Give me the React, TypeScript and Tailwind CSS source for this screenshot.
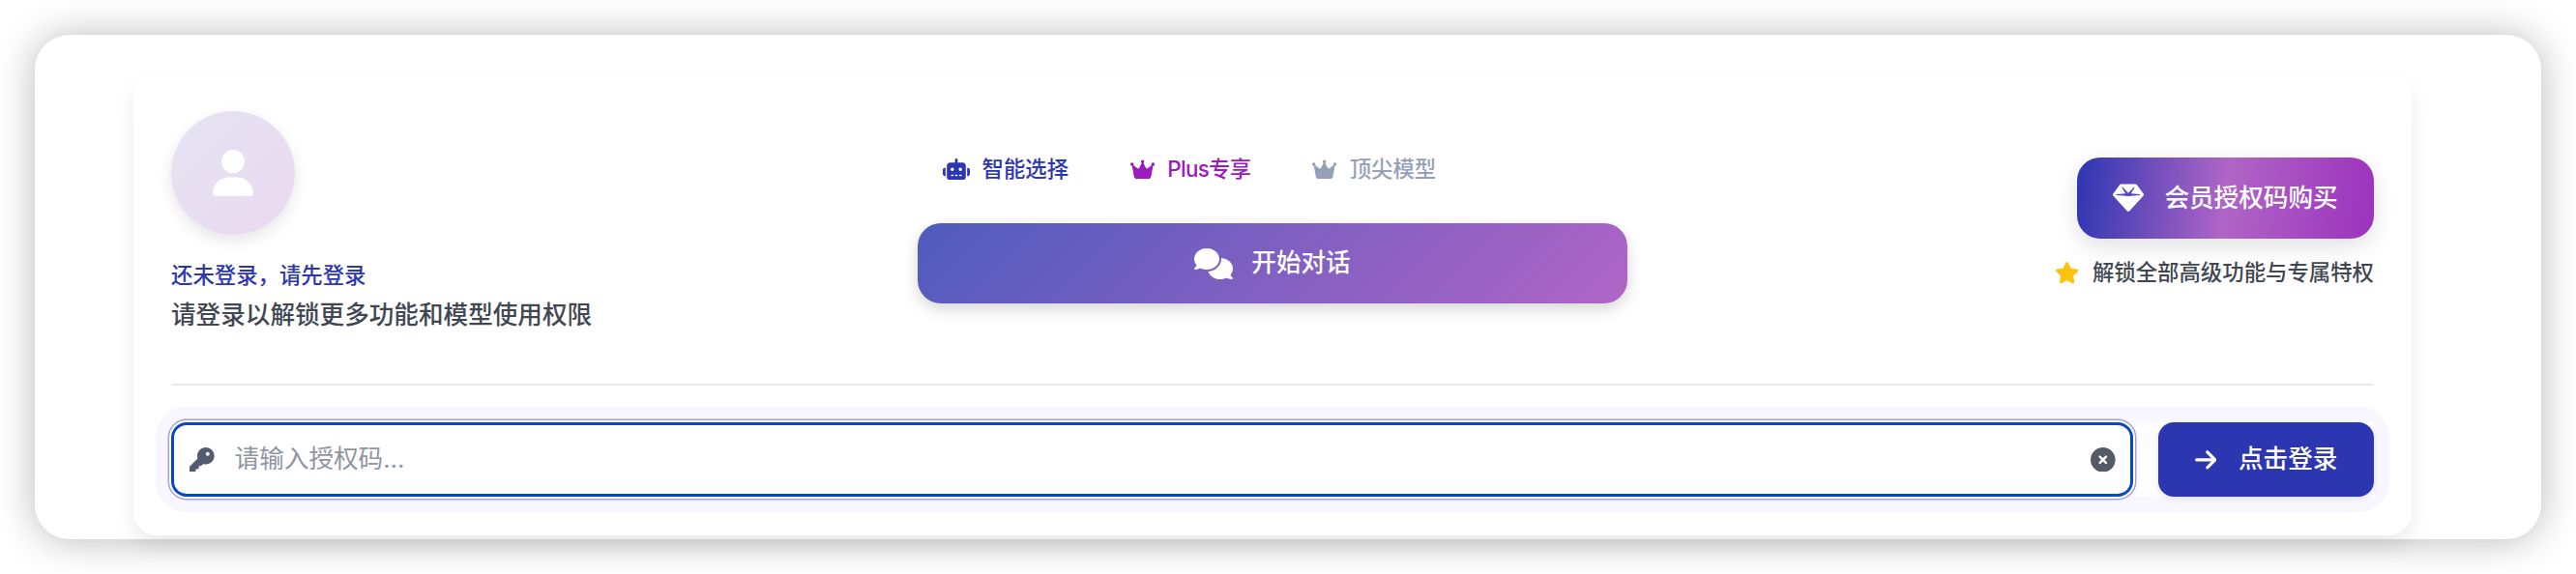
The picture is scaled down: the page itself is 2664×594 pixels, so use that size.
import { FaArrowRight, FaCircleXmark, FaComments, FaCrown, FaGem, FaKey, FaRobot, FaStar, FaUser } from 'react-icons/fa6';

const tabs = [
  { label: '智能选择', color: 'text-[#2d36b1]', Icon: FaRobot, iconSize: 'h-[22.4px] w-[28px]' },
  { label: 'Plus专享', color: 'tracking-[-0.7px] text-[#9c1ac0]', Icon: FaCrown, iconSize: 'h-[22.4px] w-[25.2px]' },
  { label: '顶尖模型', color: 'text-[#94a0b8]', Icon: FaCrown, iconSize: 'h-[22.4px] w-[25.2px]' },
];

export default function App() {
  return (
    <div className="h-[594px] w-[2664px] overflow-hidden bg-white p-[36px] font-['Inter','Noto_Sans_CJK_SC',sans-serif]">
      <div className="h-[522px] rounded-[36px] bg-white pl-[102px] pr-[134px] pt-[39px] shadow-[0_1px_40px_rgba(0,0,0,0.28)]">
        <div className="h-[479px] rounded-[24px] bg-white px-[39px] pt-[40px] shadow-[0_12px_24px_rgba(0,0,0,0.08)]">
          {/* Top row */}
          <div className="grid h-[284px] grid-cols-[1fr_734px_1fr] border-b-2 border-[#e8e9ec]">
            <div>
              <div className="flex h-[128px] w-[128px] items-center justify-center rounded-full bg-[linear-gradient(135deg,#e4e4f4,#ebd8ee)] shadow-[0_6px_16px_rgba(0,0,0,0.1)]">
                <FaUser className="h-[48px] w-[42px] text-white" />
              </div>
              <p className="mt-[25px] text-[22.4px] font-medium leading-[34px] text-[#2d36b1]">还未登录，请先登录</p>
              <p className="mt-[5px] text-[25.6px] font-medium leading-[38px] text-[#414752]">请登录以解锁更多功能和模型使用权限</p>
            </div>

            {/* Model tabs and start button */}
            <div className="pt-[32px]">
              <div className="flex gap-[12.8px]">
                {tabs.map(({ label, color, Icon, iconSize }) => (
                  <div key={label} className={`flex h-[56px] items-center gap-[13px] px-[25.6px] text-[22.4px] font-medium ${color}`}>
                    <Icon className={iconSize} />
                    <span>{label}</span>
                  </div>
                ))}
              </div>
              <button className="mt-[28px] flex h-[83px] w-full items-center justify-center gap-[19px] rounded-[24px] bg-[linear-gradient(135deg,#4f5bbd,#b065c6)] text-[25.6px] font-medium text-white shadow-[0_6px_16px_rgba(0,0,0,0.16)]">
                <FaComments className="h-[32px] w-[40px]" />
                开始对话
              </button>
            </div>

            {/* Membership */}
            <div className="flex flex-col items-end pt-[48px]">
              <button className="flex h-[84px] w-[307px] items-center justify-center gap-[21px] rounded-[24px] bg-[linear-gradient(95deg,#2d36b1,#b065c6_50%,#9c32bd)] text-[25.6px] font-medium text-white shadow-[0_8px_24px_rgba(0,0,0,0.12)]">
                <FaGem className="h-[32px] w-[32px]" />
                会员授权码购买
              </button>
              <div className="mt-[18px] flex h-[34px] items-center gap-[14px] text-[22.4px] font-medium text-[#414752]">
                <FaStar className="h-[22.4px] w-[25.2px] text-[#fbc310]" />
                <span>解锁全部高级功能与专属特权</span>
              </div>
            </div>
          </div>

          {/* Auth code row */}
          <div className="-mx-[16px] mt-[22px] rounded-[32px] bg-[#f8f6fe] p-[16px]">
            <div className="flex h-[77px] gap-[26px] bg-[#fdfdff]">
              <div className="flex flex-1 items-center rounded-[16px] border-[3px] border-[#0a47c2] bg-white pl-[16px] pr-[15px] shadow-[0_0_0_2px_#fff,0_0_0_3.5px_#9ea2e0]">
                <FaKey className="h-[25.6px] w-[25.6px] shrink-0 text-[#555b6e]" />
                <input
                  readOnly
                  placeholder="请输入授权码..."
                  className="ml-[21px] min-w-0 flex-1 bg-transparent text-[25.6px] outline-none placeholder:text-[#8f95a3]"
                />
                <FaCircleXmark className="h-[25.6px] w-[25.6px] shrink-0 text-[#555b66]" />
              </div>
              <button className="flex h-[77px] w-[223px] items-center justify-center gap-[23px] rounded-[16px] bg-[#2d36b1] text-[25.6px] font-medium text-white shadow-[0_2px_6px_rgba(0,0,0,0.1)]">
                <FaArrowRight className="h-[25.6px] w-[22.4px]" />
                点击登录
              </button>
            </div>
          </div>
        </div>
      </div>
    </div>
  );
}
